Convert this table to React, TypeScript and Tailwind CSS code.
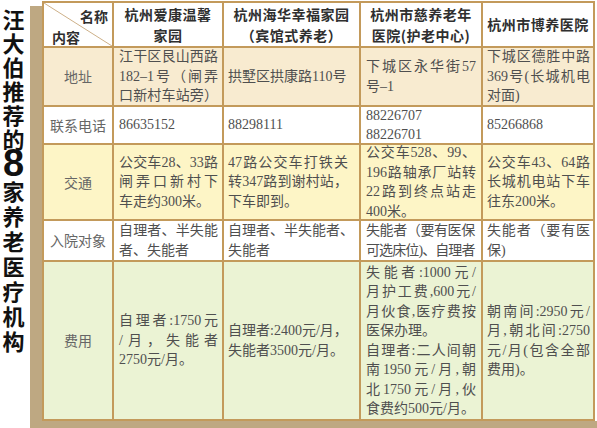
import React from "react";

const J = ({ children, cls = "" }: { children: React.ReactNode; cls?: string }) => (
  <div className={`[text-align-last:justify] text-justify ${cls}`}>{children}</div>
);
const L = ({ children, cls = "" }: { children: React.ReactNode; cls?: string }) => (
  <div className={`whitespace-nowrap text-left ${cls}`}>{children}</div>
);

const rowBg = ["bg-white", "bg-[#f8ebd0]", "bg-white", "bg-[#fdf5c6]", "bg-white", "bg-[#ebf3d4]"];

const Label = ({ text, r }: { text: string; r: number }) => (
  <div className={`${rowBg[r]} flex items-center justify-center text-[14px] text-[#666] font-['Noto_Sans_CJK_SC',sans-serif]`}>
    {text}
  </div>
);

const Cell = ({ r, pl, pr, children }: { r: number; pl: string; pr: string; children: React.ReactNode }) => (
  <div className={`${rowBg[r]} ${pl} ${pr} flex flex-col justify-center text-[14px] leading-[19.5px] text-[#4f4f4f] font-['Liberation_Serif','Noto_Sans_CJK_SC',serif]`}>
    {children}
  </div>
);

const Head = ({ children }: { children: React.ReactNode }) => (
  <div className="bg-white flex flex-col items-center justify-center text-center text-[14px] leading-[21px] font-bold tracking-[0.5px] text-[#2f2f2f] font-['Noto_Sans_CJK_SC',sans-serif]">
    {children}
  </div>
);

const c2 = { pl: "pl-[5px]", pr: "pr-[4px]" };
const c3 = { pl: "pl-[4px]", pr: "pr-[11px]" };
const c4 = { pl: "pl-[5px]", pr: "pr-[5px]" };
const c5 = { pl: "pl-[4px]", pr: "pr-[3px]" };

export default function App() {
  const title1 = ["汪", "大", "伯", "推", "荐", "的"];
  const title2 = ["家", "养", "老", "医", "疗", "机", "构"];
  return (
    <div className="w-[597px] h-[428px] bg-white flex overflow-hidden">
      <div className="w-[30px] pr-[3px] pt-[6px] flex flex-col items-center text-[#111] font-bold font-['Noto_Sans_CJK_SC',sans-serif]">
        {title1.map((c) => (
          <div key={c} className="text-[22px] leading-[24px]">{c}</div>
        ))}
        <div className="text-[38px] leading-[28px] h-[28px] font-['Liberation_Sans',sans-serif] -mt-[1px] mb-[1px]">8</div>
        {title2.map((c) => (
          <div key={c} className="text-[22px] leading-[25px]">{c}</div>
        ))}
      </div>
      <div className="flex-1 mt-[6px] h-[422px] border-l-[12px] border-b-[7px] border-solid border-[#bea882]">
        <div className="-mt-[5px] w-[553px] h-[420px] grid grid-cols-[68px_108px_135px_120px_110px] grid-rows-[43px_57px_36px_74px_39px_157px] gap-[2px] p-[2px] bg-[#c39a5b]">
          {/* header */}
          <div className="bg-white relative text-[14px] font-bold text-[#2f2f2f] font-['Noto_Sans_CJK_SC',sans-serif] leading-[18px]">
            <svg className="absolute inset-0" width="68" height="43" viewBox="0 0 68 43">
              <line x1="0" y1="0" x2="68" y2="43" stroke="#cdb088" strokeWidth="1" />
            </svg>
            <div className="relative flex flex-col h-full">
              <div className="flex justify-end pr-[4px] pt-[4px]">名称</div>
              <div className="pl-[8px] pt-[3px]">内容</div>
            </div>
          </div>
          <Head>
            <div>杭州爱康温馨</div>
            <div>家园</div>
          </Head>
          <Head>
            <div>杭州海华幸福家园</div>
            <div>（宾馆式养老）</div>
          </Head>
          <Head>
            <div>杭州市慈养老年</div>
            <div>医院(护老中心)</div>
          </Head>
          <Head>
            <div>杭州市博养医院</div>
          </Head>

          {/* address */}
          <Label text="地址" r={1} />
          <Cell r={1} {...c2}>
            <J>江干区艮山西路</J>
            <J>182–1号（闸弄</J>
            <J>口新村车站旁）</J>
          </Cell>
          <Cell r={1} {...c3}>
            <L>拱墅区拱康路110号</L>
          </Cell>
          <Cell r={1} {...c4}>
            <J>下城区永华街57</J>
            <L>号–1</L>
          </Cell>
          <Cell r={1} {...c5}>
            <J>下城区德胜中路</J>
            <J>369号(长城机电</J>
            <L>对面)</L>
          </Cell>

          {/* phone */}
          <Label text="联系电话" r={2} />
          <Cell r={2} {...c2}>
            <L>86635152</L>
          </Cell>
          <Cell r={2} {...c3}>
            <L>88298111</L>
          </Cell>
          <Cell r={2} {...c4}>
            <L cls="leading-[19px]">88226707</L>
            <L cls="leading-[19px]">88226701</L>
          </Cell>
          <Cell r={2} {...c5}>
            <L>85266868</L>
          </Cell>

          {/* transport */}
          <Label text="交通" r={3} />
          <Cell r={3} {...c2}>
            <J>公交车28、33路</J>
            <J>闸弄口新村下</J>
            <L>车走约300米。</L>
          </Cell>
          <Cell r={3} {...c3}>
            <J>47路公交车打铁关</J>
            <J>转347路到谢村站，</J>
            <L>下车即到。</L>
          </Cell>
          <Cell r={3} {...c4}>
            <J>公交车528、99、</J>
            <J>196路轴承厂站转</J>
            <J>22路到终点站走</J>
            <L>400米。</L>
          </Cell>
          <Cell r={3} {...c5}>
            <J>公交车43、64路</J>
            <J>长城机电站下车</J>
            <L>往东200米。</L>
          </Cell>

          {/* admission */}
          <Label text="入院对象" r={4} />
          <Cell r={4} {...c2}>
            <J>自理者、半失能</J>
            <L>者、失能者</L>
          </Cell>
          <Cell r={4} {...c3}>
            <L>自理者、半失能者、</L>
            <L>失能者</L>
          </Cell>
          <Cell r={4} {...c4}>
            <L cls="tracking-[-0.4px]">失能者（要有医保</L>
            <L cls="tracking-[-0.9px]">可选床位)、自理者</L>
          </Cell>
          <Cell r={4} {...c5}>
            <J>失能者（要有医</J>
            <L>保)</L>
          </Cell>

          {/* fee */}
          <Label text="费用" r={5} />
          <Cell r={5} {...c2}>
            <J>自理者:1750元</J>
            <J>/月，失能者</J>
            <L>2750元/月。</L>
          </Cell>
          <Cell r={5} {...c3}>
            <L>自理者:2400元/月，</L>
            <L>失能者3500元/月。</L>
          </Cell>
          <Cell r={5} {...c4}>
            <J>失能者:1000元/</J>
            <J>月护工费,600元/</J>
            <J>月伙食,医疗费按</J>
            <L>医保办理。</L>
            <J>自理者:二人间朝</J>
            <J>南1950元/月,朝</J>
            <J>北1750元/月,伙</J>
            <L>食费约500元/月。</L>
          </Cell>
          <Cell r={5} {...c5}>
            <J>朝南间:2950元/</J>
            <J>月,朝北间:2750</J>
            <J>元/月(包含全部</J>
            <L>费用)。</L>
          </Cell>
        </div>
      </div>
    </div>
  );
}
